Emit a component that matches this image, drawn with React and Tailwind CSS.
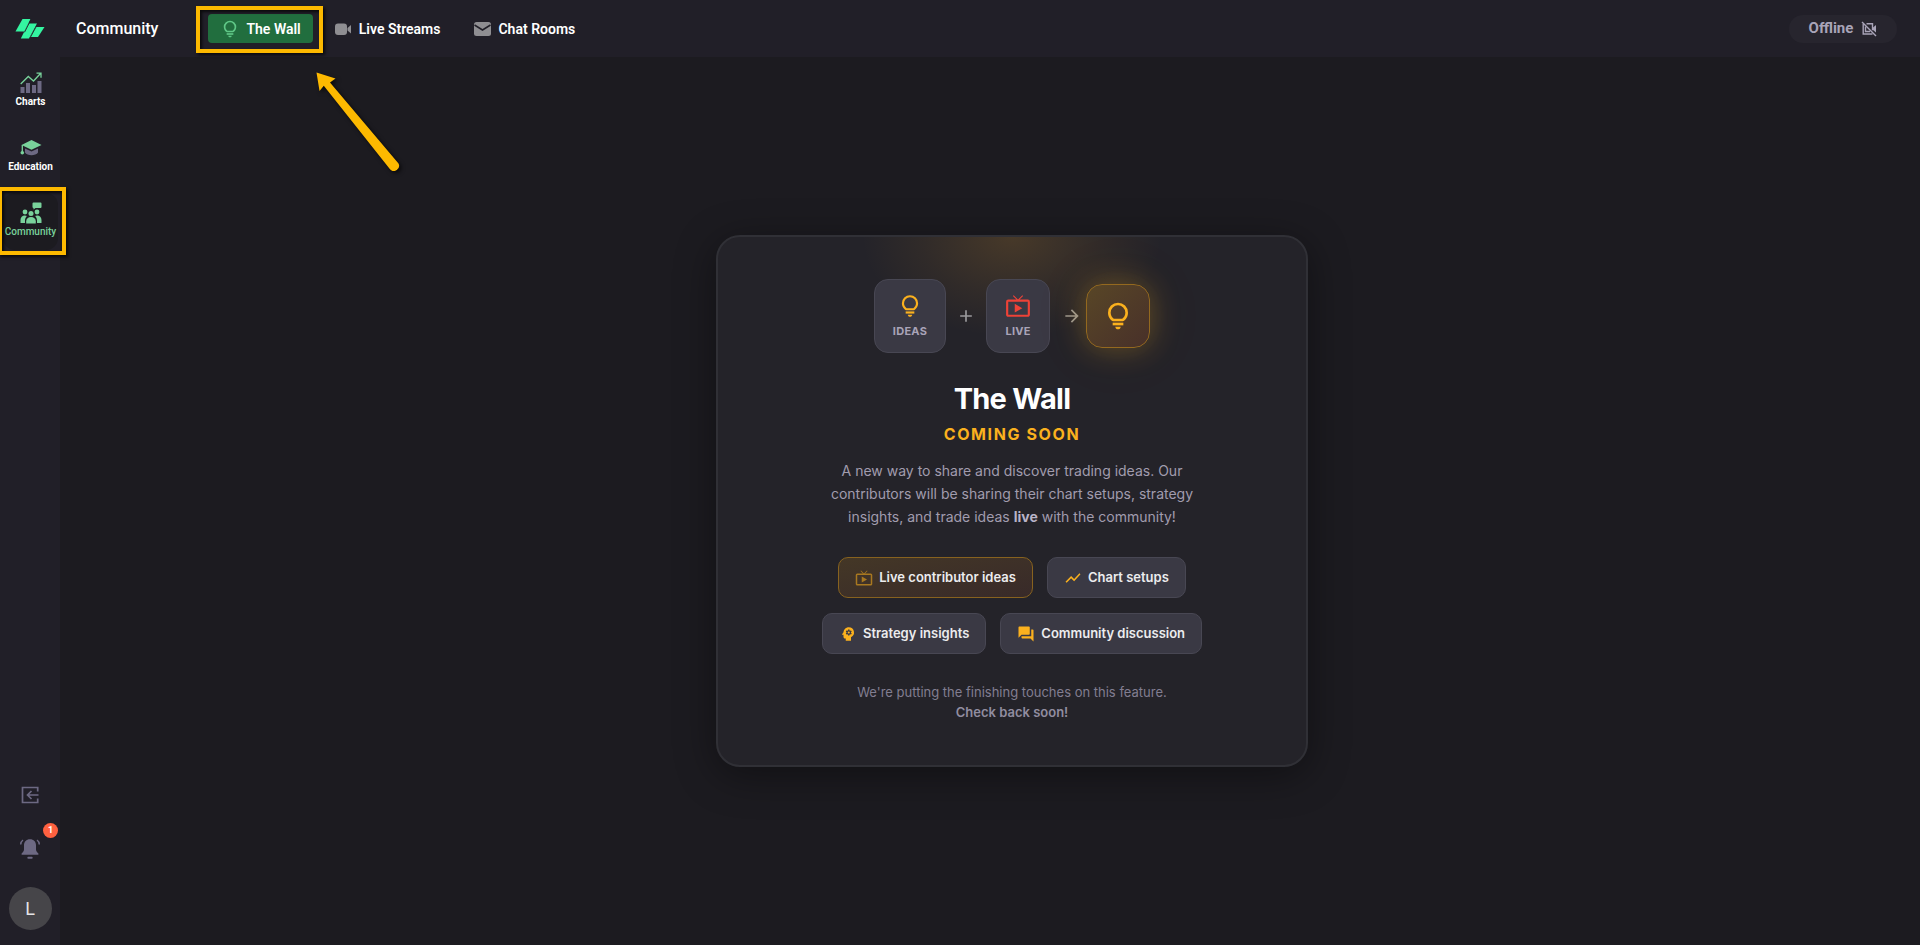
import { MdLiveTv, MdAdd, MdArrowForward, MdShowChart, MdPsychology, MdForum } from 'react-icons/md';

function Logo() {
  return (
    <svg viewBox="0 0 30 20" className="w-[30px] h-5" fill="#34f5a1">
      <path d="M7.500 0h8L9.300 12.500H0.500z" />
      <path d="M14.500 4.500h7.500L14 19.500H5.800L13.300 4.500z" />
      <path d="M20.700 8h8.800L23 18h-8z" />
      <path d="M16.300 0L9.500 13.300M22.600 5L15 19" stroke="#211f28" strokeWidth="0.900" />
    </svg>
  );
}

function BulbIcon({ className }) {
  return (
    <svg viewBox="0 0 24 24" className={className} fill="currentColor">
      <path d="M12 22c1.100 0 2-.9 2-2h-4c0 1.100.9 2 2 2z" />
      <path d="M8 17h8v2H8z" />
      <path d="M12 2a7.500 7.500 0 0 0-7.500 7.500c0 3.820 2.660 5.860 3.770 6.500h7.460c1.110-.64 3.770-2.680 3.770-6.500A7.500 7.500 0 0 0 12 2zm3.150 12h-6.300C7.800 13.160 6.500 11.680 6.500 9.500a5.500 5.500 0 0 1 11 0c0 2.180-1.300 3.660-2.350 4.500z" />
    </svg>
  );
}

function ChartsIcon() {
  return (
    <svg viewBox="0 0 22 22" className="w-[22px] h-[22px]">
      <g fill="#6d6983">
        <rect x="0.500" y="15" width="4" height="6" />
        <rect x="6" y="11" width="4" height="10" />
        <rect x="12" y="13" width="4" height="8" />
        <rect x="17.500" y="9" width="4" height="12" />
      </g>
      <path d="M.7 12l7.600-7.500 5.200 4.500L20.500 1.500M16.500 1.200h4.500v4.500" fill="none" stroke="#79d29b" strokeWidth="1.300" />
    </svg>
  );
}

function EducationIcon() {
  return (
    <svg viewBox="0 0 22 18" className="w-[22px] h-[18px]">
      <path d="M5 9.500l6.500 3 6.500-3v4c-1 1.800-4 2.700-6.500 2.700S6 15.300 5 13.500z" fill="#6d6983" />
      <path d="M11.500 1L21.500 6l-10 4.800L1.500 6z" fill="#79d29b" />
      <path d="M2.300 6v7" stroke="#79d29b" strokeWidth="1.300" />
      <circle cx="2.300" cy="13.800" r="1.800" fill="#79d29b" />
    </svg>
  );
}

function CommunityIcon() {
  return (
    <svg viewBox="0 0 22 22" className="w-[22px] h-[22px]" fill="#79d29b">
      <path d="M13.500 0.500h7a1 1 0 0 1 1 1v3.500a1 1 0 0 1-1 1h-5l-2 1.500V6a1 1 0 0 1-1-1V1.500a1 1 0 0 1 1-1z" />
      <circle cx="5" cy="10" r="2.400" />
      <circle cx="17" cy="10" r="2.400" />
      <circle cx="11" cy="11.500" r="2.500" />
      <path d="M0.500 21v-3c0-2.700 1.800-4.500 4.300-4.500 .8 0 1.500.2 2.100.6C5.500 15.500 5 17 5 18.500V21z" />
      <path d="M21.500 21v-3c0-2.700-1.800-4.500-4.300-4.500-.8 0-1.500.2-2.100.6C16.500 15.500 17 17 17 18.500V21z" />
      <path d="M6.200 21.500v-2.300c0-2.700 2-4.300 4.800-4.300s4.800 1.600 4.800 4.300v2.300z" />
    </svg>
  );
}

function VideoIcon() {
  return (
    <svg viewBox="0 0 20 20" className="size-5" fill="#8f8e92">
      <rect x="2" y="4.500" width="12" height="11.500" rx="3" />
      <path d="M14.500 9L18 6v8.500l-3.500-3z" />
    </svg>
  );
}

function MailIcon() {
  return (
    <svg viewBox="0 0 20 20" className="size-5">
      <rect x="2" y="3" width="17" height="14" rx="2.500" fill="#8f8e92" />
      <path d="M2.500 6l8 5 8-5" fill="none" stroke="#211f28" strokeWidth="1.500" />
    </svg>
  );
}

function CameraOffIcon() {
  return (
    <svg viewBox="0 0 16 16" className="size-4" fill="none" stroke="#a9a4b8" strokeWidth="1.400">
      <path d="M5.500 2.700h6v6.500M11.500 13H2.200V3M4.500 5.500v5h4.500" />
      <path d="M12 6.500L15 4v7.500L12 9z" fill="#a9a4b8" stroke="none" />
      <path d="M1 1l14 14" />
    </svg>
  );
}

function ExitIcon() {
  return (
    <svg viewBox="0 0 18 18" className="size-[18px]" fill="none" stroke="#6d6983" strokeWidth="1.700">
      <path d="M16.700 5.500V1.500H1.500v15h15.200v-4" />
      <path d="M17.500 9H6.500M10.500 5l-4 4 4 4" />
    </svg>
  );
}

function BellIcon() {
  return (
    <svg viewBox="0 0 22 22" className="size-[22px]" fill="#6d6983">
      <path d="M11 1.300c-3.700 0-6 2.600-6 6v4.200c0 1.600-.9 2.600-2.400 3.900v1.400h16.800v-1.400c-1.500-1.300-2.400-2.300-2.400-3.900V7.300c0-3.400-2.300-6-6-6z" />
      <rect x="8.300" y="18.700" width="5.400" height="2" rx="1" />
      <path d="M4 2C2.500 3 1.700 4.600 1.700 6.500M18 2c1.500 1 2.300 2.600 2.300 4.500" fill="none" stroke="#6d6983" strokeWidth="1.500" />
    </svg>
  );
}

const NAV = [
  { label: 'Charts', Icon: ChartsIcon },
  { label: 'Education', Icon: EducationIcon },
  { label: 'Community', Icon: CommunityIcon, active: true },
];

const TABS = [
  { label: 'The Wall', icon: <BulbIcon className="size-5 text-[#5fc786]" />, active: true },
  { label: 'Live Streams', icon: <VideoIcon /> },
  { label: 'Chat Rooms', icon: <MailIcon /> },
];

const FEATURES = [
  { label: 'Live contributor ideas', icon: <MdLiveTv className="size-[18px] text-[#a87820]" />, highlight: true },
  { label: 'Chart setups', icon: <MdShowChart className="size-[18px] text-[#fbb11e]" /> },
  { label: 'Strategy insights', icon: <MdPsychology className="size-[18px] text-[#fbb11e]" /> },
  { label: 'Community discussion', icon: <MdForum className="size-[18px] text-[#fbb11e]" /> },
];

function Header() {
  return (
    <header className="h-[57px] flex items-center bg-[#211f28] pr-[23px]">
      <a href="#" aria-label="Home" className="w-[60px] flex justify-center">
        <Logo />
      </a>
      <h1 className="ml-4 text-base font-medium text-white">Community</h1>
      <nav className="ml-[50px] flex gap-2">
        {TABS.map(({ label, icon, active }) => (
          <div key={label} className="relative">
            <button
              className={`h-[29px] px-3 flex items-center gap-1.5 rounded-sm text-sm font-semibold text-white ${
                active ? 'bg-[#216e3e]' : ''
              }`}
            >
              {icon}
              {label}
            </button>
            {active && (
              <>
                {/* Highlight box and pointer */}
                <div className="absolute -left-3 -right-[10px] -top-2 -bottom-[10px] border-4 border-[#fdb900] shadow-[2px_2px_3px_rgba(0,0,0,0.7),inset_2px_2px_3px_rgba(0,0,0,0.7)] pointer-events-none" />
                <svg
                  viewBox="0 0 90 104"
                  className="absolute left-[107px] top-[57px] w-[90px] h-[104px] z-10 drop-shadow-[2px_2px_2px_rgba(0,0,0,0.7)] pointer-events-none"
                  fill="#fdb900"
                >
                  <path d="M1.500 1.500L20.500 7.500l-5.500 4L83.500 92.500a5.200 5.200 0 0 1-8.500 5.800L8.800 14.800 4.500 20z" />
                </svg>
              </>
            )}
          </div>
        ))}
      </nav>
      <button className="ml-auto h-7 w-[108px] flex items-center justify-center gap-2 rounded-full bg-[#27252e] text-[15px] font-bold text-[#a9a4b8]">
        Offline
        <CameraOffIcon />
      </button>
    </header>
  );
}

function Sidebar() {
  return (
    <aside className="w-[60px] shrink-0 flex flex-col items-center bg-[#211f28] pb-[15px]">
      <nav className="w-full flex flex-col gap-2 pt-1.5">
        {NAV.map(({ label, Icon, active }) => (
          <a
            key={label}
            href="#"
            className={`relative h-[57px] ml-[3px] mr-0.5 flex flex-col items-center pt-2 rounded-xl text-[10px] leading-[14px] ${
              active ? 'bg-[#1c1b20] text-[#79d29b] font-medium' : 'text-white font-bold'
            }`}
          >
            <span className="h-6 flex items-center">
              <Icon />
            </span>
            {label}
            {active && (
              <span className="absolute -left-[5px] -right-2 -top-1.5 -bottom-[5px] border-4 border-[#fdb900] shadow-[2px_2px_3px_rgba(0,0,0,0.7),inset_2px_2px_3px_rgba(0,0,0,0.7)] z-10 pointer-events-none" />
            )}
          </a>
        ))}
      </nav>
      <div className="mt-auto flex flex-col items-center">
        <button aria-label="Exit">
          <ExitIcon />
        </button>
        <button aria-label="Notifications" className="relative mt-[34px]">
          <BellIcon />
          <span className="absolute -right-[17px] -top-[15px] size-[15px] flex items-center justify-center rounded-full bg-[#ff6140] text-[9px] font-bold text-white">
            1
          </span>
        </button>
        <button className="mt-[27px] size-[43px] rounded-full bg-[#464549] text-lg text-[#e4e4e6]">L</button>
      </div>
    </aside>
  );
}

function Tile({ icon, label }) {
  return (
    <div className="h-[74px] px-[18px] flex flex-col items-center justify-center gap-1 rounded-[14px] border border-[#484753] bg-[#3a3944]">
      {icon}
      <span className="text-[11px] leading-4 font-bold tracking-wide text-[#a9a4b8]">{label}</span>
    </div>
  );
}

function ComingSoonCard() {
  return (
    <section className="w-full max-w-[592px] px-16 pt-[42px] pb-[43px] flex flex-col items-center rounded-3xl border-2 border-[#303036] bg-[#242329] bg-[radial-gradient(ellipse_150px_100px_at_50%_0%,rgba(245,165,40,0.17),rgba(245,165,40,0.06)_60%,transparent)] shadow-[0_8px_40px_rgba(0,0,0,0.4)] font-['Inter',sans-serif] text-center">
      <div className="flex items-center">
        <Tile icon={<BulbIcon className="size-[26px] text-[#fbb11e]" />} label="IDEAS" />
        <MdAdd className="mx-2.5 size-5 text-[#9a999c]" />
        <Tile icon={<MdLiveTv className="size-[26px] text-[#ee4237]" />} label="LIVE" />
        <MdArrowForward className="ml-3 mr-1 size-5 text-[#9a9690]" />
        <div className="size-16 flex items-center justify-center rounded-2xl border border-[#94691f] bg-gradient-to-br from-[#584626] to-[#483029] shadow-[0_0_30px_rgba(251,177,30,0.3),0_0_80px_rgba(251,177,30,0.06)]">
          <BulbIcon className="size-8 text-[#fbb11e]" />
        </div>
      </div>

      <h2 className="mt-[26px] text-[29px] leading-10 font-bold tracking-tight text-white">The Wall</h2>
      <p className="mt-[5px] text-base leading-5 font-bold tracking-widest text-[#fbb11e]">COMING SOON</p>
      <p className="mt-[15px] max-w-[380px] text-sm leading-[23px] text-[#a19cae]">
        A new way to share and discover trading ideas. Our contributors will be sharing their chart setups, strategy
        insights, and trade ideas <strong className="font-bold text-[#b9b4c8]">live</strong> with the community!
      </p>

      <ul className="mt-[29px] max-w-[400px] flex flex-wrap justify-center gap-x-3.5 gap-y-[15px]">
        {FEATURES.map(({ label, icon, highlight }) => (
          <li
            key={label}
            className={`h-[41px] px-4 flex items-center gap-1.5 rounded-[10px] border text-[13px] font-semibold text-[#ececee] ${
              highlight ? 'border-[#87621f] bg-gradient-to-br from-[#443726] to-[#382a29]' : 'border-[#484753] bg-[#3a3944]'
            }`}
          >
            {icon}
            {label}
          </li>
        ))}
      </ul>

      <p className="mt-7 text-[13px] leading-5 text-[#827e91]">
        We're putting the finishing touches on this feature.
        <br />
        <strong className="font-semibold text-[#918da0]">Check back soon!</strong>
      </p>
    </section>
  );
}

export default function App() {
  return (
    <div className="min-h-screen flex flex-col bg-[#1c1b20] font-['Roboto',sans-serif]">
      <Header />
      <div className="flex-1 flex">
        <Sidebar />
        <main className="flex-1 flex items-center justify-center pl-11">
          <ComingSoonCard />
        </main>
      </div>
    </div>
  );
}
